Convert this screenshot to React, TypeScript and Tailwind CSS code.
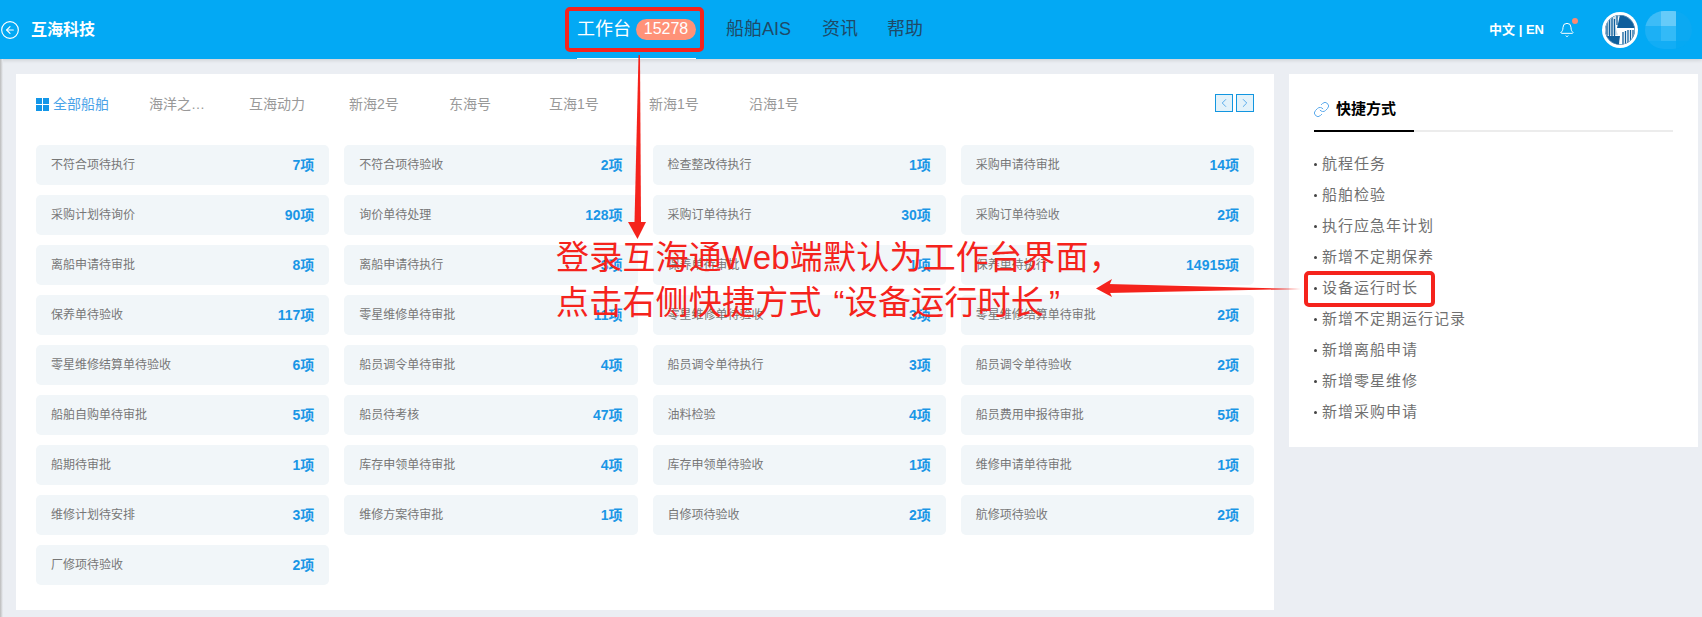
import { Bell, ChevronLeft, ChevronRight, Link, CircleArrowLeft } from "lucide-react";

const rows: [string, string][] = [
  ["不符合项待执行", "7项"], ["不符合项待验收", "2项"], ["检查整改待执行", "1项"], ["采购申请待审批", "14项"],
  ["采购计划待询价", "90项"], ["询价单待处理", "128项"], ["采购订单待执行", "30项"], ["采购订单待验收", "2项"],
  ["离船申请待审批", "8项"], ["离船申请待执行", "3项"], ["保养单待审批", "1项"], ["保养单待执行", "14915项"],
  ["保养单待验收", "117项"], ["零星维修单待审批", "11项"], ["零星维修单待验收", "3项"], ["零星维修结算单待审批", "2项"],
  ["零星维修结算单待验收", "6项"], ["船员调令单待审批", "4项"], ["船员调令单待执行", "3项"], ["船员调令单待验收", "2项"],
  ["船舶自购单待审批", "5项"], ["船员待考核", "47项"], ["油料检验", "4项"], ["船员费用申报待审批", "5项"],
  ["船期待审批", "1项"], ["库存申领单待审批", "4项"], ["库存申领单待验收", "1项"], ["维修申请单待审批", "1项"],
  ["维修计划待安排", "3项"], ["维修方案待审批", "1项"], ["自修项待验收", "2项"], ["航修项待验收", "2项"],
  ["厂修项待验收", "2项"],
];
const tabs = ["海洋之…", "互海动力", "新海2号", "东海号", "互海1号", "新海1号", "沿海1号"];
const links = ["航程任务", "船舶检验", "执行应急年计划", "新增不定期保养", "设备运行时长", "新增不定期运行记录", "新增离船申请", "新增零星维修", "新增采购申请"];

function Logo() {
  return (
    <svg width="36" height="36" viewBox="0 0 36 36">
      <defs>
        <clipPath id="logo-disc"><circle cx="18" cy="18" r="14.5" /></clipPath>
      </defs>
      <circle cx="18" cy="18" r="18" fill="#fff" />
      <circle cx="18" cy="18" r="15" fill="#0f5f9c" />
      <g clipPath="url(#logo-disc)">
        <rect x="0" y="0" width="36" height="36" fill="#fff" />
        <path d="M3 3H17V5Q10 8 16 23H3Z" fill="#cfe0ec" />
        <g stroke="#0f5f9c" strokeWidth="1.3">
          <path d="M5 5v19M7.5 5v19M10 5v19M12.5 7v17M15 3v10" />
          <path d="M21 20v14M23.5 19v15M26 18v16M28.5 18v16M31 18v16" />
        </g>
        <path d="M18 2H34V16H15Q17 8 18 2Z" fill="#0f5f9c" />
        <path d="M3 24H18Q17 30 17 34H3Z" fill="#0f5f9c" />
      </g>
    </svg>
  );
}

export default function App() {
  return (
    <div className="relative h-[617px] w-[1702px] overflow-hidden bg-[#ebeef3] font-['Liberation_Sans','Noto_Sans_CJK_SC',sans-serif]">
      <header className="flex h-[59px] items-center bg-[#03a9f4] shadow-[0_1px_4px_rgba(0,0,0,0.15)]">
        <CircleArrowLeft className="h-5 w-5 text-white" strokeWidth={1.4} />
        <div className="ml-[11px] w-[546px] text-base font-bold text-white">互海科技</div>
        <nav className="flex h-full items-center text-[18px] text-[#1f4a68]">
          <div className="flex h-full items-center border-b border-white text-white">
            <span>工作台</span>
            <span className="ml-[5px] flex h-[21px] w-[60px] items-center justify-center rounded-full bg-[#ff9278] text-base text-white">15278</span>
          </div>
          <span className="ml-[30px]">船舶AIS</span>
          <span className="ml-[31px]">资讯</span>
          <span className="ml-[29px]">帮助</span>
        </nav>
        <div className="ml-auto flex items-center">
          <span className="text-[13px] font-bold text-white">中文 | EN</span>
          <div className="relative ml-[15px] h-4 w-4">
            <Bell className="h-4 w-4 text-white" strokeWidth={1.5} />
            <span className="absolute -right-[3px] -top-[4px] h-[6px] w-[6px] rounded-full bg-[#ff8a70]" />
          </div>
          <div className="ml-[27px] flex h-9 w-9"><Logo /></div>
          <div className="ml-[7px] mr-[10px] grid h-[38px] w-[47px] grid-cols-[16px_15px_16px] grid-rows-[15px_15px_8px] overflow-hidden rounded-[22px]">
            <span className="bg-[#3dbcf7]" />
            <span className="bg-[#66cbf9]" />
            <span className="bg-[#0ba9f2]" />
            <span className="bg-[#1cb0f5]" />
            <span className="bg-[#33baf7]" />
            <span className="bg-[#0ba9f2]" />
            <span className="bg-[#12adf5]" />
            <span className="bg-[#12adf5]" />
            <span className="bg-[#05a9f3]" />
          </div>
        </div>
      </header>

      <main className="flex items-start gap-[15px] pl-4 pr-1 pt-[15px]">
        <section className="h-[536px] w-[1258px] bg-white px-5">
          <div className="flex h-[71px] items-start pt-[21px] text-sm text-[#999]">
            <div className="flex h-[18px] w-[113px] items-center text-[#4aa3e8]">
              <span className="grid h-[13px] w-[13px] grid-cols-2 gap-px">
                <i className="bg-[#1296e8]" /><i className="bg-[#1296e8]" /><i className="bg-[#1296e8]" /><i className="bg-[#1296e8]" />
              </span>
              <span className="ml-1">全部船舶</span>
            </div>
            {tabs.map((t) => (
              <span key={t} className="h-[18px] w-[100px] leading-[18px]">{t}</span>
            ))}
            <div className="-mt-px ml-auto flex gap-[3px]">
              <span className="flex h-[18px] w-[18px] items-center justify-center border border-[#1296e0] bg-[#e3f2fa] text-[#4aa3e8]"><ChevronLeft className="h-[14px] w-[14px]" strokeWidth={1.5} /></span>
              <span className="flex h-[18px] w-[18px] items-center justify-center border border-[#1296e0] bg-[#e3f2fa] text-[#4aa3e8]"><ChevronRight className="h-[14px] w-[14px]" strokeWidth={1.5} /></span>
            </div>
          </div>
          <div className="grid grid-cols-4 gap-x-[15px] gap-y-[10px]">
            {rows.map(([name, count]) => (
              <div key={name} className="flex h-10 items-center justify-between rounded-[5px] bg-[#f1f6f9] px-[15px]">
                <span className="text-xs text-[#777]">{name}</span>
                <span className="text-sm font-bold text-[#1a96e6]">{count}</span>
              </div>
            ))}
          </div>
        </section>

        <aside className="h-[373px] w-[409px] bg-white px-[25px]">
          <div className="flex h-[58px] border-b-2 border-[#ececec]">
            <div className="-mb-[2px] flex w-[100px] items-center border-b-2 border-black pt-[14px]">
              <Link className="-ml-px h-[17px] w-[17px] text-[#5aa9ec]" strokeWidth={1.4} />
              <span className="ml-[6px] text-[15px] font-bold text-black">快捷方式</span>
            </div>
          </div>
          <ul className="mt-[17px] text-[15px] tracking-[1px] text-[#707070]">
            {links.map((l) => (
              <li key={l} className="flex h-[31px] items-center">
                <span className="mr-[5px] h-[3px] w-[3px] rounded-full bg-[#444]" />
                {l}
              </li>
            ))}
          </ul>
        </aside>
      </main>

      <div className="pointer-events-none absolute bottom-0 left-0 top-[59px] w-[3px] bg-gradient-to-r from-[#bbb] to-[#ebeef3]" />

      {/* red annotations */}
      <div className="absolute left-[565px] top-[7px] h-[45px] w-[139px] rounded-[5px] border-[4px] border-[#f5231c]" />
      <div className="absolute left-[1304px] top-[271px] h-[36px] w-[131px] rounded-[5px] border-[4px] border-[#f5231c]" />
      <svg className="absolute left-0 top-0" width="1702" height="617" fill="#f5231c">
        <path d="M638.5 55 L640 55 L641 222 L634.5 222 Z" />
        <path d="M628 222 L646 222 L637.5 239 Z" />
        <path d="M1301 289 L1108 284 L1108 293 Z" />
        <path d="M1096 288.5 L1112 279 L1108 288.5 L1112 297 Z" />
      </svg>
      <div className="absolute left-[556px] top-[235px] whitespace-nowrap text-[33px] leading-[45px] tracking-[0.2px] text-[#f5231c]">
        <div>登录互海通Web端默认为工作台界面，</div>
        <div>点击右侧快捷方式<span className="ml-[12px]">“</span>设备运行时长<span className="ml-[5px]">”</span></div>
      </div>
    </div>
  );
}
